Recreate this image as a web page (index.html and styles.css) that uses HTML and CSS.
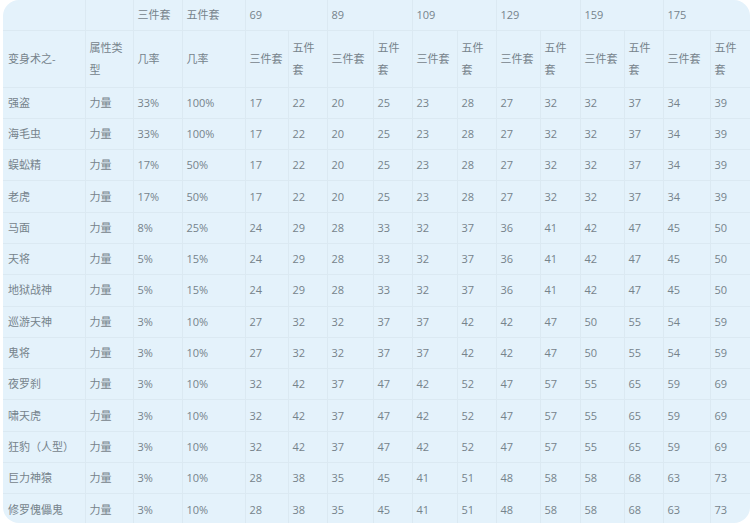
FILE: index.html
```html
<!DOCTYPE html>
<html lang="zh">
<head>
<meta charset="utf-8">
<title>变身术属性表</title>
<link rel="stylesheet" href="styles.css">
</head>
<body>
<div class="card">
<table class="grid">
<colgroup>
<col class="c82"><col class="c48"><col class="c49"><col class="c63">
<col class="c43"><col class="c39"><col class="c46"><col class="c39">
<col class="c45"><col class="c39"><col class="c44"><col class="c40">
<col class="c44"><col class="c39"><col class="c47"><col class="c40">
</colgroup>
<tr class="h1">
<td></td><td></td><td>三件套</td><td>五件套</td>
<td colspan="2">69</td><td colspan="2">89</td><td colspan="2">109</td>
<td colspan="2">129</td><td colspan="2">159</td><td colspan="2">175</td>
</tr>
<tr class="h2">
<td>变身术之-</td><td>属性类型</td><td>几率</td><td>几率</td>
<td>三件套</td><td>五件套</td><td>三件套</td><td>五件套</td><td>三件套</td><td>五件套</td>
<td>三件套</td><td>五件套</td><td>三件套</td><td>五件套</td><td>三件套</td><td>五件套</td>
</tr>
<tr><td>强盗</td><td>力量</td><td>33%</td><td>100%</td><td>17</td><td>22</td><td>20</td><td>25</td><td>23</td><td>28</td><td>27</td><td>32</td><td>32</td><td>37</td><td>34</td><td>39</td></tr>
<tr><td>海毛虫</td><td>力量</td><td>33%</td><td>100%</td><td>17</td><td>22</td><td>20</td><td>25</td><td>23</td><td>28</td><td>27</td><td>32</td><td>32</td><td>37</td><td>34</td><td>39</td></tr>
<tr><td>蜈蚣精</td><td>力量</td><td>17%</td><td>50%</td><td>17</td><td>22</td><td>20</td><td>25</td><td>23</td><td>28</td><td>27</td><td>32</td><td>32</td><td>37</td><td>34</td><td>39</td></tr>
<tr><td>老虎</td><td>力量</td><td>17%</td><td>50%</td><td>17</td><td>22</td><td>20</td><td>25</td><td>23</td><td>28</td><td>27</td><td>32</td><td>32</td><td>37</td><td>34</td><td>39</td></tr>
<tr><td>马面</td><td>力量</td><td>8%</td><td>25%</td><td>24</td><td>29</td><td>28</td><td>33</td><td>32</td><td>37</td><td>36</td><td>41</td><td>42</td><td>47</td><td>45</td><td>50</td></tr>
<tr><td>天将</td><td>力量</td><td>5%</td><td>15%</td><td>24</td><td>29</td><td>28</td><td>33</td><td>32</td><td>37</td><td>36</td><td>41</td><td>42</td><td>47</td><td>45</td><td>50</td></tr>
<tr><td>地狱战神</td><td>力量</td><td>5%</td><td>15%</td><td>24</td><td>29</td><td>28</td><td>33</td><td>32</td><td>37</td><td>36</td><td>41</td><td>42</td><td>47</td><td>45</td><td>50</td></tr>
<tr><td>巡游天神</td><td>力量</td><td>3%</td><td>10%</td><td>27</td><td>32</td><td>32</td><td>37</td><td>37</td><td>42</td><td>42</td><td>47</td><td>50</td><td>55</td><td>54</td><td>59</td></tr>
<tr><td>鬼将</td><td>力量</td><td>3%</td><td>10%</td><td>27</td><td>32</td><td>32</td><td>37</td><td>37</td><td>42</td><td>42</td><td>47</td><td>50</td><td>55</td><td>54</td><td>59</td></tr>
<tr><td>夜罗刹</td><td>力量</td><td>3%</td><td>10%</td><td>32</td><td>42</td><td>37</td><td>47</td><td>42</td><td>52</td><td>47</td><td>57</td><td>55</td><td>65</td><td>59</td><td>69</td></tr>
<tr><td>啸天虎</td><td>力量</td><td>3%</td><td>10%</td><td>32</td><td>42</td><td>37</td><td>47</td><td>42</td><td>52</td><td>47</td><td>57</td><td>55</td><td>65</td><td>59</td><td>69</td></tr>
<tr><td>狂豹（人型）</td><td>力量</td><td>3%</td><td>10%</td><td>32</td><td>42</td><td>37</td><td>47</td><td>42</td><td>52</td><td>47</td><td>57</td><td>55</td><td>65</td><td>59</td><td>69</td></tr>
<tr><td>巨力神猿</td><td>力量</td><td>3%</td><td>10%</td><td>28</td><td>38</td><td>35</td><td>45</td><td>41</td><td>51</td><td>48</td><td>58</td><td>58</td><td>68</td><td>63</td><td>73</td></tr>
<tr><td>修罗傀儡鬼</td><td>力量</td><td>3%</td><td>10%</td><td>28</td><td>38</td><td>35</td><td>45</td><td>41</td><td>51</td><td>48</td><td>58</td><td>58</td><td>68</td><td>63</td><td>73</td></tr>
</table>
</div>
</body>
</html>
```
FILE: styles.css
```css
html, body {
  margin: 0;
  padding: 0;
  background: #ffffff;
}

.card {
  margin-left: 3px;
  width: 747px;
  height: 523px;
  border-radius: 16px;
  background: #e4f2fb;
  overflow: hidden;
}

.grid {
  width: 747px;
  table-layout: fixed;
  border-collapse: collapse;
  font-family: "Open Sans", "Noto Sans CJK SC", sans-serif;
  font-size: 11px;
  color: #76838b;
}

.grid td {
  padding: 0 3px 0 4px;
  line-height: 22px;
  vertical-align: middle;
  text-align: left;
  border-left: 1px solid #dbe9f2;
  border-top: 1px solid #dbe9f2;
  overflow: hidden;
}

.grid td:first-child {
  border-left: none;
  padding-left: 5px;
}

.grid tr {
  height: 31.3px;
}

.grid tr.h1 {
  height: 30px;
}

.grid tr.h1 td {
  border-top: none;
}

.grid tr.h2 {
  height: 57px;
}

.c82 { width: 82px; }
.c48 { width: 48px; }
.c49 { width: 49px; }
.c63 { width: 63px; }
.c43 { width: 43px; }
.c39 { width: 39px; }
.c46 { width: 46px; }
.c45 { width: 45px; }
.c44 { width: 44px; }
.c40 { width: 40px; }
.c47 { width: 47px; }
```
